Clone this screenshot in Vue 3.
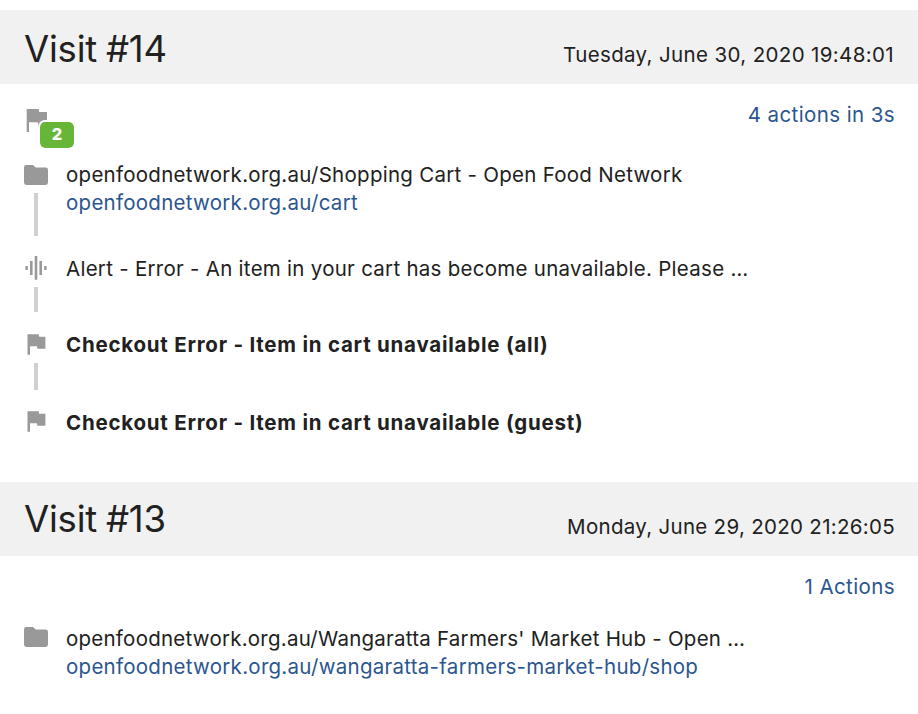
<script setup>
const visits = [
  {
    id: 14,
    date: 'Tuesday, June 30, 2020 19:48:01',
    dateClass: 'date-a',
    summary: '4 actions in 3s',
    goals: 2,
    actions: [
      { cls: 'page first', icon: 'folder', title: 'openfoodnetwork.org.au/Shopping Cart - Open Food Network', url: 'openfoodnetwork.org.au/cart' },
      { cls: 'event', icon: 'wave', title: 'Alert - Error - An item in your cart has become unavailable. Please …' },
      { cls: 'goal', icon: 'flag', title: 'Checkout Error - Item in cart unavailable (all)' },
      { cls: 'goal last', icon: 'flag', title: 'Checkout Error - Item in cart unavailable (guest)' },
    ],
  },
  {
    id: 13,
    date: 'Monday, June 29, 2020 21:26:05',
    dateClass: 'date-b',
    summary: '1 Actions',
    goals: 0,
    actions: [
      { cls: 'page last', icon: 'folder', title: "openfoodnetwork.org.au/Wangaratta Farmers' Market Hub - Open …", url: 'openfoodnetwork.org.au/wangaratta-farmers-market-hub/shop' },
    ],
  },
]
</script>

<template>
  <main class="log">
    <section v-for="v in visits" :key="v.id" class="visit" :class="'visit-' + v.id">
      <header class="head">
        <h2>Visit #{{ v.id }}</h2>
        <time :class="v.dateClass">{{ v.date }}</time>
      </header>
      <div class="summary">
        <div v-if="v.goals" class="goals">
          <svg class="goal-flag" width="22" height="24" viewBox="0 0 22 24">
            <path d="M.7 0H12.6L13.2 2.9H21V16H12.3L11.7 13.3H3V23H.7Z" />
          </svg>
          <span class="badge">{{ v.goals }}</span>
        </div>
        <a class="count">{{ v.summary }}</a>
      </div>
      <ul class="actions">
        <li v-for="(a, i) in v.actions" :key="i" :class="a.cls">
          <div class="rail">
            <svg v-if="a.icon === 'folder'" width="24" height="20" viewBox="0 0 24 20">
              <path d="M2.4 0H9L11.7 2.5H21.6A2.4 2.4 0 0 1 24 4.9V17.6A2.4 2.4 0 0 1 21.6 20H2.4A2.4 2.4 0 0 1 0 17.6V2.4A2.4 2.4 0 0 1 2.4 0Z" />
            </svg>
            <svg v-else-if="a.icon === 'wave'" width="24" height="24" viewBox="0 0 24 24">
              <path d="M1.4 10h2.4v4h-2.4zM6 5h2.6v14H6zM10.7 0h2.6v23.8h-2.6zM15.4 5h2.6v14h-2.6zM20.2 10h2.4v4h-2.4z" />
            </svg>
            <svg v-else width="24" height="21" viewBox="0 0 24 21">
              <path d="M3.5 .2H14.7L15.2 2.8H21.4V14.8H13.4L12.9 12.2H6V20.8H3.5Z" />
            </svg>
            <i class="line"></i>
          </div>
          <div class="text">
            <div class="title">{{ a.title }}</div>
            <a v-if="a.url">{{ a.url }}</a>
          </div>
        </li>
      </ul>
    </section>
  </main>
</template>

<style>
body { background: #fff; }
</style>

<style scoped>
.log {
  box-sizing: border-box;
  width: 918px;
  height: 714px;
  padding-top: 10px;
  overflow: hidden;
  font-family: Inter, "Liberation Sans", sans-serif;
  font-size: 20.5px;
  line-height: 28px;
  letter-spacing: 0.4px;
  color: #212121;
  white-space: nowrap;
}
.visit-14 { height: 472px; }
.head {
  box-sizing: border-box;
  display: flex;
  justify-content: space-between;
  height: 74px;
  padding: 0 23px 0 24px;
  background: #f1f1f1;
}
h2 {
  margin: 0;
  font-size: 36.5px;
  font-weight: 400;
  line-height: 78px;
  letter-spacing: -0.2px;
  word-spacing: -1.2px;
}
.visit-13 h2 { line-height: 74px; }
time { padding-top: 31px; }
.date-a { letter-spacing: 0.36px; margin-right: 1px; }
.date-b { letter-spacing: 0.3px; }
a { color: #2b568f; }
.summary {
  box-sizing: border-box;
  display: flex;
  height: 74px;
  padding: 17px 23px 0 24px;
}
.visit-13 .summary { height: 69px; }
.count { margin-left: auto; }
.goals {
  position: relative;
  width: 50px;
  height: 48px;
}
.goal-flag { display: block; margin: 8px 0 0 2px; }
.badge {
  position: absolute;
  left: 14px;
  top: 19px;
  width: 34px;
  height: 26px;
  border: 2px solid #fff;
  border-radius: 7px;
  background: #68b637;
  background-clip: padding-box;
  color: #fff;
  font-size: 16.5px;
  font-weight: 800;
  line-height: 25px;
  letter-spacing: 0;
  text-align: center;
}
svg { display: block; flex: none; fill: #999; }
.actions {
  margin: 0;
  padding: 0 24px;
  list-style: none;
}
li { display: flex; gap: 18px; }
.rail {
  box-sizing: border-box;
  display: flex;
  flex-direction: column;
  align-items: center;
  gap: 8px;
  width: 24px;
  padding-top: 4px;
}
.line { width: 4px; flex: 1; background: #d0d0d0; }
.last .line { display: none; }
.page.first { height: 75px; margin: 3px 0 19px; }
.page.last .rail { padding-top: 2px; }
.page.last .title { letter-spacing: 0.24px; }
.event { height: 57px; }
.event .rail { padding-top: 1px; gap: 7px; }
.goal { height: 59px; margin-top: 19px; }
.goal .rail { padding-top: 3px; }
.goal.last .rail { padding-top: 2px; }
.text {
  display: flex;
  flex-direction: column;
  letter-spacing: 0.27px;
}
.goal .title {
  font-weight: 700;
  letter-spacing: 0.77px;
}
</style>
